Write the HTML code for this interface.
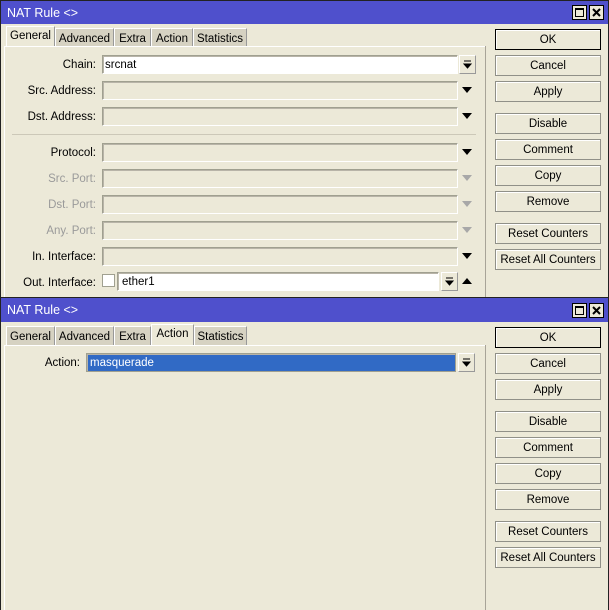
<!DOCTYPE html><html><head><style>
*{margin:0;padding:0;box-sizing:border-box}
body{width:609px;height:610px;background:#ece9d8;font-family:"Liberation Sans",sans-serif;font-size:11.5px;color:#000;position:relative;overflow:hidden}
.a{position:absolute}
.title{left:0;width:609px;height:24px;background:#4f50cc;color:#fff;font-size:12.5px;padding:5px 0 0 6px;border:1px solid #222;border-bottom:none}
.tb{width:15px;height:15px;background:#ece9d8;border:1px solid #000;top:5px}
.tab{height:19px;background:#d6d2c2;border:1px solid #fff;border-right-color:#999;border-bottom:none;text-align:center;padding-top:4px}
.tab.on{background:#ece9d8;height:21px;padding-top:3px}
.lbl{width:96px;text-align:right;left:0}
.dis{color:#9a9a9a}
.f{left:102px;width:356px;height:19px;border:1px solid #a0a090;border-bottom-color:#fff;border-right-color:#fff;box-shadow:inset 1px 1px 0 #b8b4a8;padding:3px 0 0 2px;line-height:13px}
.fw{background:#fff}
.dd{width:17px;height:19px;border:1px solid #fff;border-right-color:#999;border-bottom-color:#999;background:#ece9d8}
.dd svg{position:absolute;left:3px;top:4px}
.arr{width:0;height:0;border-left:5px solid transparent;border-right:5px solid transparent;border-top:6px solid #000}
.arr.g{border-top-color:#a8a8a8}
.btn{left:495px;width:106px;height:21px;border:1px solid #909088;box-shadow:inset 1px 1px 0 #fff;text-align:center;padding-top:4px;background:#ece9d8}
.ok{border:1px solid #000}
.vl{background:#a8a498}
</style></head><body>
<div class="a" style="left:0;top:0;width:1px;height:610px;background:#222"></div>
<div class="a" style="left:608px;top:0;width:1px;height:610px;background:#222"></div>
<div class="a title" style="top:0">NAT Rule &lt;&gt;</div>
<div class="a tb" style="left:572px"><div class="a" style="left:2px;top:2px;width:9px;height:9px;border:1px solid #000;border-top-width:2px"></div></div>
<div class="a tb" style="left:589px"><svg class="a" style="left:2px;top:2px" width="9" height="9"><path d="M1 1L8 8M8 1L1 8" stroke="#000" stroke-width="2"/></svg></div>
<div class="a tab on" style="left:6px;top:26px;width:49px">General</div>
<div class="a tab" style="left:55px;top:28px;width:59px">Advanced</div>
<div class="a tab" style="left:114px;top:28px;width:37px">Extra</div>
<div class="a tab" style="left:151px;top:28px;width:42px">Action</div>
<div class="a tab" style="left:193px;top:28px;width:54px">Statistics</div>
<div class="a" style="left:4px;top:46px;width:482px;height:1px;background:#fff"></div>
<div class="a" style="left:4px;top:46px;width:1px;height:252px;background:#fff"></div>
<div class="a vl" style="left:485px;top:46px;width:1px;height:252px"></div>
<div class="a" style="left:12px;top:134px;width:464px;height:1px;background:#ccc8b8"></div>

<div class="a lbl" style="top:59px">Chain:</div><div class="a f fw" style="top:55px">srcnat</div><div class="a dd" style="left:459px;top:55px"><svg width="9" height="9"><path d="M1 1H8M1 4H8L4.5 8Z" stroke="#000" fill="#000"/></svg></div>
<div class="a lbl" style="top:85px">Src. Address:</div><div class="a f" style="top:81px"></div><div class="a arr" style="left:462px;top:87px"></div>
<div class="a lbl" style="top:111px">Dst. Address:</div><div class="a f" style="top:107px"></div><div class="a arr" style="left:462px;top:113px"></div>
<div class="a lbl" style="top:147px">Protocol:</div><div class="a f" style="top:143px"></div><div class="a arr" style="left:462px;top:149px"></div>
<div class="a lbl dis" style="top:173px">Src. Port:</div><div class="a f" style="top:169px"></div><div class="a arr g" style="left:462px;top:175px"></div>
<div class="a lbl dis" style="top:199px">Dst. Port:</div><div class="a f" style="top:195px"></div><div class="a arr g" style="left:462px;top:201px"></div>
<div class="a lbl dis" style="top:225px">Any. Port:</div><div class="a f" style="top:221px"></div><div class="a arr g" style="left:462px;top:227px"></div>
<div class="a lbl" style="top:251px">In. Interface:</div><div class="a f" style="top:247px"></div><div class="a arr" style="left:462px;top:253px"></div>
<div class="a lbl" style="top:277px">Out. Interface:</div>
<div class="a" style="left:102px;top:274px;width:13px;height:13px;background:#fff;border:1px solid #a0a090"></div>
<div class="a f fw" style="left:117px;width:322px;top:272px;padding-left:4px">ether1</div>
<div class="a dd" style="left:441px;top:272px"><svg width="9" height="9"><path d="M1 1H8M1 4H8L4.5 8Z" stroke="#000" fill="#000"/></svg></div>
<div class="a" style="left:462px;top:278px;width:0;height:0;border-left:5px solid transparent;border-right:5px solid transparent;border-bottom:6px solid #000"></div>

<div class="a btn ok" style="top:29px">OK</div>
<div class="a btn" style="top:55px">Cancel</div>
<div class="a btn" style="top:81px">Apply</div>
<div class="a btn" style="top:113px">Disable</div>
<div class="a btn" style="top:139px">Comment</div>
<div class="a btn" style="top:165px">Copy</div>
<div class="a btn" style="top:191px">Remove</div>
<div class="a btn" style="top:223px">Reset Counters</div>
<div class="a btn" style="top:249px">Reset All Counters</div>

<div class="a" style="left:0;top:297px;width:609px;height:1px;background:#222"></div>
<div class="a title" style="top:298px;border-top:none">NAT Rule &lt;&gt;</div>
<div class="a tb" style="left:572px;top:303px"><div class="a" style="left:2px;top:2px;width:9px;height:9px;border:1px solid #000;border-top-width:2px"></div></div>
<div class="a tb" style="left:589px;top:303px"><svg class="a" style="left:2px;top:2px" width="9" height="9"><path d="M1 1L8 8M8 1L1 8" stroke="#000" stroke-width="2"/></svg></div>
<div class="a tab" style="left:6px;top:326px;width:49px">General</div>
<div class="a tab" style="left:55px;top:326px;width:59px">Advanced</div>
<div class="a tab" style="left:114px;top:326px;width:37px">Extra</div>
<div class="a tab on" style="left:151px;top:324px;width:43px">Action</div>
<div class="a tab" style="left:194px;top:326px;width:53px">Statistics</div>
<div class="a" style="left:4px;top:345px;width:482px;height:1px;background:#fff"></div>
<div class="a" style="left:4px;top:345px;width:1px;height:265px;background:#fff"></div>
<div class="a vl" style="left:485px;top:345px;width:1px;height:265px"></div>
<div class="a" style="left:0;top:357px;width:80px;text-align:right">Action:</div>
<div class="a f" style="left:86px;width:370px;top:353px;background:#316ac5;color:#fff;padding-left:3px;border:1px solid #a0a090">masquerade</div>
<div class="a dd" style="left:458px;top:353px"><svg width="9" height="9"><path d="M1 1H8M1 4H8L4.5 8Z" stroke="#000" fill="#000"/></svg></div>

<div class="a btn ok" style="top:327px">OK</div>
<div class="a btn" style="top:353px">Cancel</div>
<div class="a btn" style="top:379px">Apply</div>
<div class="a btn" style="top:411px">Disable</div>
<div class="a btn" style="top:437px">Comment</div>
<div class="a btn" style="top:463px">Copy</div>
<div class="a btn" style="top:489px">Remove</div>
<div class="a btn" style="top:521px">Reset Counters</div>
<div class="a btn" style="top:547px">Reset All Counters</div>
</body></html>
